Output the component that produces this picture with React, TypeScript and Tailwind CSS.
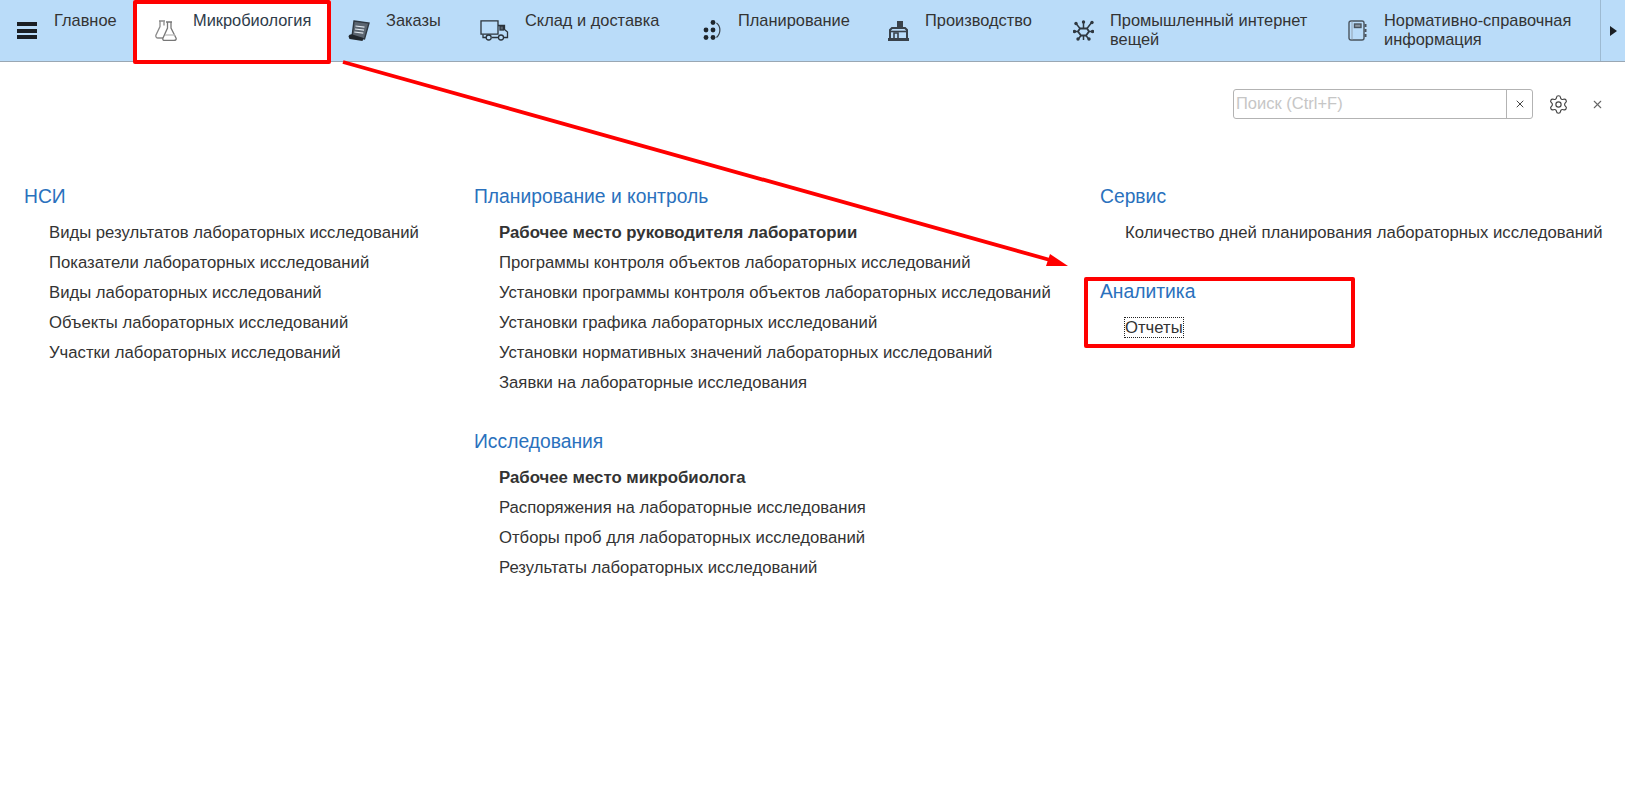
import React from "react";
import { Settings, X } from "lucide-react";

const Flask = () => (
  <svg width="22" height="21" viewBox="0 0 22 21" fill="none" stroke="#8a8a8a" strokeWidth="1.3">
    <path d="M4 1h6M5 1.5v5L1 15c-.6 1.6.4 3 2 3h5" />
    <path d="M9 1.5v4" />
    <path d="M11 2h6M12.5 2v6L8 18c-.6 1.5.3 2.5 1.5 2.5H19c1.7 0 2.6-1.1 2-2.5L16 8V2" stroke="#777" />
    <path d="M10 15h10" stroke="#bbb" />
  </svg>
);

const Orders = () => (
  <svg width="22" height="21" viewBox="0 0 22 21" fill="none">
    <path d="M6 1 21 3 16.500 19 4 17Z" fill="#5b6570" stroke="#2e3740" strokeWidth="1.4" />
    <path d="M7.500 6l9 1.200M7 9l9 1.200M6.300 12l9 1.200" stroke="#dfe7ee" strokeWidth="1.2" />
    <path d="M0.500 16.500c.5-2 2.500-2.500 4-2l11 3.500-1 3L1.500 19Z" fill="#20262c" />
  </svg>
);

const Truck = () => (
  <svg width="29" height="21" viewBox="0 0 29 21" fill="none" stroke="#2b333b" strokeWidth="1.3">
    <path d="M1 .8h17v13.400H1z" />
    <path d="M3 14.500v3h3M12 17.500h6M23.500 17.500h4v-5.500l-3-2.500V5.500H18" />
    <rect x="20" y="6" width="3.500" height="4" fill="#5b6570" />
    <circle cx="8.700" cy="17.500" r="2.500" />
    <circle cx="21" cy="17.500" r="2.500" />
  </svg>
);

const Planning = () => (
  <svg width="18" height="21" viewBox="0 0 18 21" fill="#1f262d">
    <circle cx="10" cy="2.500" r="2.400" />
    <circle cx="3" cy="10" r="2.400" />
    <circle cx="10" cy="10" r="2.400" />
    <circle cx="3" cy="17.500" r="2.400" />
    <circle cx="10" cy="17.500" r="2.400" />
    <path d="M13.500 3c4.500 3.500 4.500 10.500 0 14.500" fill="none" stroke="#39424b" strokeWidth="1.2" />
  </svg>
);

const Factory = () => (
  <svg width="21" height="21" viewBox="0 0 21 21" fill="none">
    <path d="M9 1h6v7H9z" fill="#39424b" />
    <path d="M2 18V10l2-2h13l2 2v8" stroke="#39424b" strokeWidth="2" />
    <path d="M3 11.500h15" stroke="#39424b" strokeWidth="1.600" />
    <path d="M6 19v-6h4v6" stroke="#39424b" strokeWidth="1.600" />
    <path d="M0 18h21v3H0z" fill="#39424b" />
  </svg>
);

const Iot = () => (
  <svg width="21" height="21" viewBox="0 0 21 21" fill="#2f3840" stroke="#2f3840" strokeWidth="1.500">
    <path d="M7 8.500h7l2 3-3 4H8l-3-4Z" fill="none" strokeWidth="1.800" />
    <path d="M10.500 1v7M3 3.500l4 5M19 2l-5 6.500M0.500 11.500H5M16 11.500h5M8 15.500l-3 4M13 15.500l3 4M10.500 15.500V20" fill="none" strokeWidth="1.500" />
    <circle cx="3" cy="3.500" r="1.700" stroke="none" />
    <circle cx="19" cy="2.500" r="1.700" stroke="none" />
    <circle cx="1.500" cy="11.500" r="1.700" stroke="none" />
    <circle cx="19.500" cy="11.500" r="1.700" stroke="none" />
    <circle cx="5" cy="19" r="1.700" stroke="none" />
    <circle cx="16" cy="19" r="1.700" stroke="none" />
    <circle cx="10.500" cy="2" r="1.700" stroke="none" />
  </svg>
);

const Notebook = () => (
  <svg width="20" height="21" viewBox="0 0 20 21" fill="none" stroke="#4a545e" strokeWidth="1.400">
    <rect x="1" y="1" width="15" height="19" rx="2" />
    <path d="M4 1v19" strokeWidth="0.800" stroke="#8b96a1" />
    <rect x="6.500" y="4" width="6.500" height="3.500" fill="#8b96a1" />
    <path d="M17.500 4v3M17.500 9v3M17.500 14v3" strokeWidth="2" />
  </svg>
);

const navItems = [
  { label: "Главное", cls: "w-[80px]", iconCls: "hidden", icon: null },
  { label: "Заказы", cls: "w-[132px] pl-[17px]", iconCls: "w-[38px]", icon: <Orders /> },
  { label: "Склад и доставка", cls: "w-[220px] pl-[17px]", iconCls: "w-[45px]", icon: <Truck /> },
  { label: "Планирование", cls: "w-[187px] pl-[20px]", iconCls: "w-[35px]", icon: <Planning /> },
  { label: "Производство", cls: "w-[186px] pl-[18px]", iconCls: "w-[37px]", icon: <Factory /> },
  { label: "Промышленный интернет вещей", cls: "w-[274px] pl-[17px]", iconCls: "w-[37px]", icon: <Iot /> },
  { label: "Нормативно-справочная информация", cls: "w-[270px] pl-[18px]", iconCls: "w-[36px]", icon: <Notebook /> },
];

const Section = ({ title, items, cls = "" }: { title: string; items: { t: string; b?: boolean; focus?: boolean }[]; cls?: string }) => (
  <section className={cls}>
    <h2 className="text-[19.3px] leading-[24px] text-[#2a71bd] font-normal">{title}</h2>
    <ul className="mt-[9px] pl-[25px]">
      {items.map((i) => (
        <li key={i.t} className={`h-[30px] leading-[30px] whitespace-nowrap text-[#333] ${i.b ? "font-bold text-[16.8px]" : "text-[16.7px]"}`}>
          {i.focus ? <span className="outline-dotted outline-1 outline-[#222]">{i.t}</span> : i.t}
        </li>
      ))}
    </ul>
  </section>
);

export default function App() {
  const [a, b, c, d, e, f, g] = navItems;
  return (
    <div className="relative w-[1625px] h-[796px] overflow-hidden bg-white font-['Liberation_Sans',Arial,sans-serif] text-[#333]">
      <nav className="flex h-[62px] bg-[#badcf9] border-b border-[#9aa7b3] text-[16.4px] leading-[19px]">
        <div className="w-[54px] pl-[17px] pt-[22px]">
          <div className="w-[20px] h-[17px] flex flex-col justify-between">
            <span className="block h-[4px] bg-[#1b1f24]" />
            <span className="block h-[4px] bg-[#1b1f24]" />
            <span className="block h-[4px] bg-[#1b1f24]" />
          </div>
        </div>
        <div className={`${a.cls} pt-[11px]`}>{a.label}</div>
        <div className="w-[197px] h-[61px] bg-white flex pl-[21px] text-[#2d3b4a]">
          <div className="w-[38px] pt-[20px]"><Flask /></div>
          <div className="pt-[11px]">Микробиология</div>
        </div>
        {[b, c, d, e, f, g].map((n) => (
          <div key={n.label} className={`flex shrink-0 ${n.cls}`}>
            <div className={`shrink-0 pt-[20px] ${n.iconCls}`}>{n.icon}</div>
            <div className="pt-[11px] w-[210px]">{n.label}</div>
          </div>
        ))}
        <div className="ml-auto w-[25px] border-l border-[#9dbad2] flex items-center justify-center">
          <span className="w-0 h-0 border-y-[5px] border-y-transparent border-l-[7px] border-l-[#1b1f24]" />
        </div>
      </nav>

      <div className="flex justify-end items-center h-[30px] mt-[27px] pr-[21px]">
        <div className="flex w-[300px] h-[30px] border border-[#b3b3b3] rounded-[3px]">
          <div className="flex-1 pl-[2px] text-[16.5px] leading-[27px] text-[#c6c6c6]">Поиск (Ctrl+F)</div>
          <div className="w-[26px] border-l border-[#b3b3b3] flex items-center justify-center">
            <X size={12} color="#444" />
          </div>
        </div>
        <Settings size={21} strokeWidth={1.300} color="#444" className="ml-[15px]" />
        <X size={13} color="#666" className="ml-[22px]" />
      </div>

      <main className="flex mt-[66px] pl-[24px]">
        <div className="w-[450px]">
          <Section
            title="НСИ"
            items={[
              { t: "Виды результатов лабораторных исследований" },
              { t: "Показатели лабораторных исследований" },
              { t: "Виды лабораторных исследований" },
              { t: "Объекты лабораторных исследований" },
              { t: "Участки лабораторных исследований" },
            ]}
          />
        </div>
        <div className="w-[626px]">
          <Section
            title="Планирование и контроль"
            items={[
              { t: "Рабочее место руководителя лаборатории", b: true },
              { t: "Программы контроля объектов лабораторных исследований" },
              { t: "Установки программы контроля объектов лабораторных исследований" },
              { t: "Установки графика лабораторных исследований" },
              { t: "Установки нормативных значений лабораторных исследований" },
              { t: "Заявки на лабораторные исследования" },
            ]}
          />
          <Section
            cls="mt-[32px]"
            title="Исследования"
            items={[
              { t: "Рабочее место микробиолога", b: true },
              { t: "Распоряжения на лабораторные исследования" },
              { t: "Отборы проб для лабораторных исследований" },
              { t: "Результаты лабораторных исследований" },
            ]}
          />
        </div>
        <div>
          <Section title="Сервис" items={[{ t: "Количество дней планирования лабораторных исследований" }]} />
          <Section cls="mt-[32px]" title="Аналитика" items={[{ t: "Отчеты", focus: true }]} />
        </div>
      </main>

      <div className="absolute left-[133px] top-0 w-[198px] h-[64px] border-[4px] border-[#ff0000] rounded-[2px]" />
      <div className="absolute left-[1084px] top-[277px] w-[271px] h-[71px] border-[4px] border-[#ff0000] rounded-[2px]" />
      <svg className="absolute left-0 top-0 pointer-events-none" width="1625" height="796" fill="none">
        <path d="M343 62 L1050 260" stroke="#ff0000" strokeWidth="3.800" />
        <path d="M1068 266 L1050 254 L1046 266 Z" fill="#ff0000" />
      </svg>
    </div>
  );
}
